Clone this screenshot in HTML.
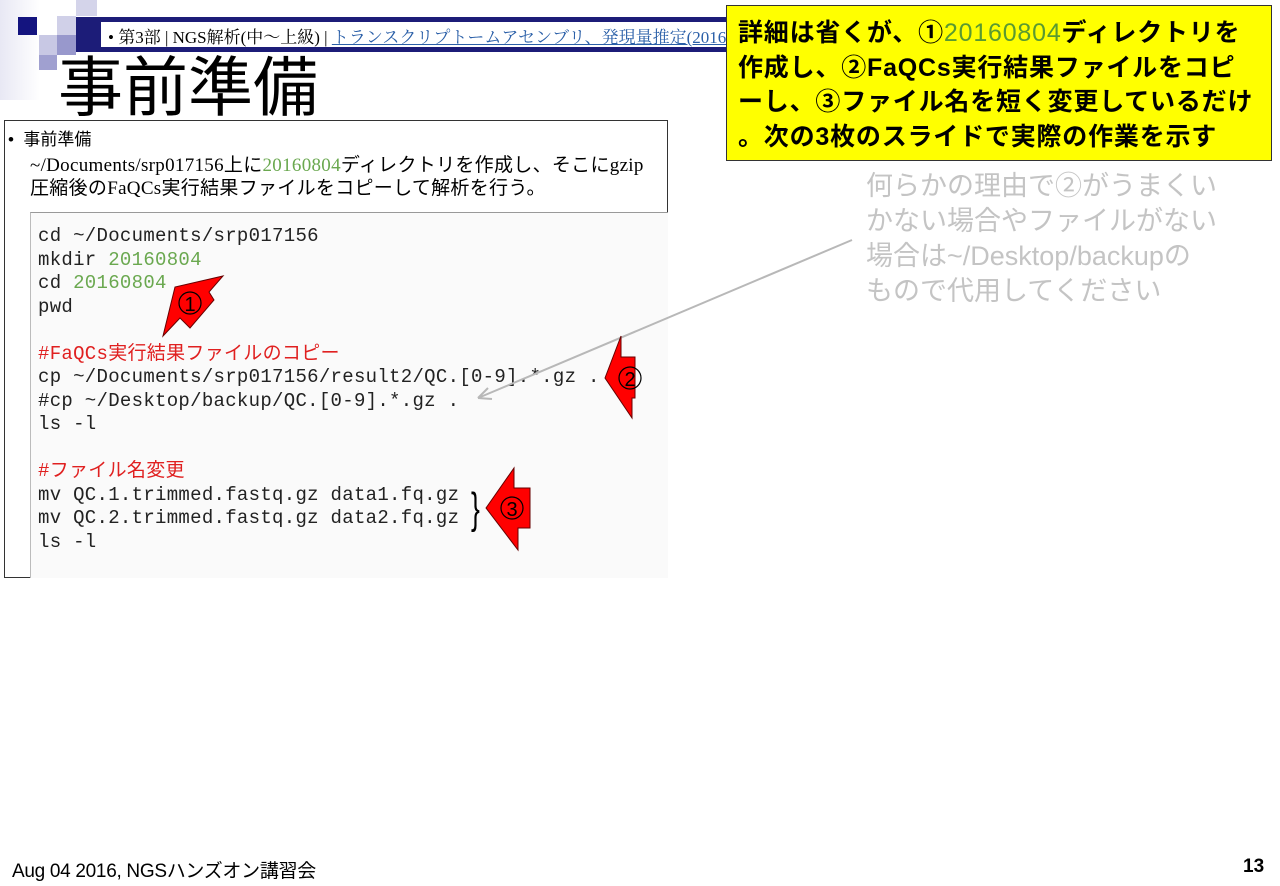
<!DOCTYPE html>
<html><head><meta charset="utf-8"><style>
body{margin:0;width:1280px;height:886px;background:#fff;position:relative;overflow:hidden;font-family:"Liberation Sans","Noto Sans CJK JP",sans-serif}
.a{position:absolute;white-space:nowrap}
.sq{position:absolute}
.code{font-family:"Liberation Mono","Noto Sans CJK JP",monospace;font-size:19px;color:#222;letter-spacing:0.3px}
.g{color:#6aa84f}.r{color:#e02020}
.y{font-size:25px;color:#000;line-height:34.5px;font-weight:bold;letter-spacing:0.8px}
.gr{font-size:27px;color:#c4c4c4;line-height:35px}
</style></head><body>
<div class="sq" style="left:0;top:0;width:40px;height:100px;background:linear-gradient(90deg,#e8e8f4,#fff)"></div>
<div class="sq" style="left:76px;top:0;width:21px;height:16px;background:#d4d4ea"></div>
<div class="sq" style="left:18px;top:17px;width:19px;height:18px;background:#14147f"></div>
<div class="sq" style="left:57px;top:16px;width:19px;height:19px;background:#d0d0e8"></div>
<div class="sq" style="left:39px;top:35px;width:18px;height:20px;background:#c8c8e4"></div>
<div class="sq" style="left:57px;top:35px;width:19px;height:20px;background:#9898cc"></div>
<div class="sq" style="left:39px;top:55px;width:18px;height:15px;background:#a0a0d0"></div>
<div class="sq" style="left:76px;top:17px;width:654px;height:35px;background:#1c1c78"></div>
<div class="sq" style="left:101px;top:22px;width:629px;height:25px;background:#fff;overflow:hidden">
<div class="a" style="left:7px;top:1px;font-size:17px;font-family:'Liberation Serif','Noto Serif CJK SC',serif">• 第3部 | NGS解析(中～上級) | <span style="color:#2a5fa8;text-decoration:underline">トランスクリプトームアセンブリ、発現量推定(2016</span></div></div>
<div class="a" style="left:58px;top:50px;font-size:65px;line-height:76px">事前準備</div>
<div class="sq" style="left:4px;top:120px;width:662px;height:456px;border:1px solid #333"></div>
<div class="a" style="left:8px;top:125px;font-size:17px">•&nbsp; 事前準備</div>
<div class="a" style="left:30px;top:154px;font-size:19px;line-height:23px;font-family:'Liberation Serif','Noto Sans CJK JP',serif;letter-spacing:0.3px">~/Documents/srp017156上に<span class="g">20160804</span>ディレクトリを作成し、そこにgzip<br>圧縮後のFaQCs実行結果ファイルをコピーして解析を行う。</div>
<div class="sq" style="left:30px;top:212px;width:637px;height:365px;background:#fafafa;border-top:1px solid #999;border-left:1px solid #bbb"></div>
<div class="a code" style="left:38px;top:225px;line-height:23.5px">cd ~/Documents/srp017156<br>mkdir <span class="g">20160804</span><br>cd <span class="g">20160804</span><br>pwd<br><br><span class="r">#FaQCs実行結果ファイルのコピー</span><br>cp ~/Documents/srp017156/result2/QC.[0-9].*.gz .<br>#cp ~/Desktop/backup/QC.[0-9].*.gz .<br>ls -l<br><br><span class="r">#ファイル名変更</span><br>mv QC.1.trimmed.fastq.gz data1.fq.gz<br>mv QC.2.trimmed.fastq.gz data2.fq.gz<br>ls -l</div>
<div class="a" style="left:468px;top:484px;font-size:44px;font-weight:100;line-height:50px;transform:scaleX(0.6)">}</div>
<div class="sq" style="left:726px;top:5px;width:544px;height:154px;background:#ffff00;border:1px solid #333"></div>
<div class="a y" style="left:738px;top:16px">詳細は省くが、①<span style="color:#5a9a30;font-weight:normal">20160804</span>ディレクトリを<br>作成し、②FaQCs実行結果ファイルをコピ<br>ーし、③ファイル名を短く変更しているだけ<br>。次の3枚のスライドで実際の作業を示す</div>
<div class="a gr" style="left:866px;top:169px">何らかの理由で②がうまくい<br>かない場合やファイルがない<br>場合は~/Desktop/backupの<br>もので代用してください</div>
<svg class="sq" style="left:0;top:0" width="1280" height="886">
<line x1="852" y1="240" x2="478" y2="398" stroke="#b8b8b8" stroke-width="2"/>
<path d="M478 398 L488 388 M478 398 L492 399" stroke="#b8b8b8" stroke-width="2"/>
<polygon points="163,336 175,287 223,276 209,292 214,300 190,328 180,318" fill="#f00" stroke="#600" stroke-width="1"/>
<circle cx="190" cy="303" r="11" fill="none" stroke="#000" stroke-width="1.2"/><text x="190" y="311" font-size="20" text-anchor="middle" font-family="Liberation Sans">1</text>
<polygon points="605,378 621,336 621,357 635,357 635,398 632,398 632,418" fill="#f00" stroke="#600" stroke-width="1"/>
<circle cx="630" cy="378" r="11" fill="none" stroke="#000" stroke-width="1.2"/><text x="630" y="386" font-size="20" text-anchor="middle" font-family="Liberation Sans">2</text>
<polygon points="486,508 514,468 514,488 530,488 530,528 518,528 518,550" fill="#f00" stroke="#600" stroke-width="1"/>
<circle cx="512" cy="508" r="11" fill="none" stroke="#000" stroke-width="1.2"/><text x="512" y="516" font-size="20" text-anchor="middle" font-family="Liberation Sans">3</text>
</svg>
<div class="a" style="left:12px;top:856px;font-size:19px;letter-spacing:-0.3px">Aug 04 2016, NGSハンズオン講習会</div>
<div class="a" style="left:1243px;top:856px;font-size:19px;font-weight:bold">13</div>
</body></html>
